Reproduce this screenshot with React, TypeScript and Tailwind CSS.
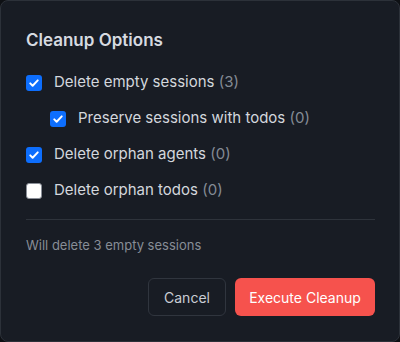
import React, { useState } from 'react';

interface Option {
  id: string;
  label: string;
  count: number;
  checked: boolean;
  nested?: boolean;
}

const Check: React.FC<{ checked: boolean; onClick: () => void }> = ({ checked, onClick }) => (
  <button
    type="button"
    onClick={onClick}
    className={
      checked
        ? 'w-4 h-4 rounded-[3px] bg-[#0d6efd] flex items-center justify-center shrink-0'
        : 'w-4 h-4 rounded-[3px] bg-white border border-[#8a8f98] shrink-0'
    }
  >
    {checked && (
      <svg viewBox="0 0 16 16" className="w-3 h-3" fill="none">
        <path d="M3 8.5l3.2 3.2L13 4.5" stroke="white" strokeWidth="2.6" strokeLinecap="round" strokeLinejoin="round" />
      </svg>
    )}
  </button>
);

export default function App() {
  const [options, setOptions] = useState<Option[]>([
    { id: 'empty', label: 'Delete empty sessions', count: 3, checked: true },
    { id: 'preserve', label: 'Preserve sessions with todos', count: 0, checked: true, nested: true },
    { id: 'agents', label: 'Delete orphan agents', count: 0, checked: true },
    { id: 'todos', label: 'Delete orphan todos', count: 0, checked: false },
  ]);

  const toggle = (id: string) =>
    setOptions((prev) => prev.map((o) => (o.id === id ? { ...o, checked: !o.checked } : o)));

  return (
    <div className="w-[400px] h-[342px] bg-[#0e1014]" style={{ fontFamily: 'Inter, "Liberation Sans", sans-serif' }}>
      <div className="w-full h-full rounded-lg border border-[#2c3139] bg-[#181c24] pl-[25px] pr-[24px] pt-[27px]">
        <h2 className="text-[17px] leading-6 font-semibold text-[#d6dae0]">Cleanup Options</h2>

        <div className="mt-[20px] flex flex-col gap-[15px]">
          {options.map((o) => (
            <label
              key={o.id}
              className={`flex items-center gap-3 h-[21px] cursor-pointer ${o.nested ? 'pl-6' : ''}`}
            >
              <Check checked={o.checked} onClick={() => toggle(o.id)} />
              <span className="text-[15px] text-[#d3d7dd]">
                {o.label} <span className="text-[#848b95]">({o.count})</span>
              </span>
            </label>
          ))}
        </div>

        <div className="mt-[18px] border-t border-[#2e333b]" />

        <p className="mt-[15px] text-[13px] leading-5 text-[#878d96]">Will delete 3 empty sessions</p>

        <div className="mt-[23px] flex justify-end gap-[9px]">
          <button className="h-[38px] w-[78px] rounded-md border border-[#30353e] text-[14px] text-[#c9cdd4]">
            Cancel
          </button>
          <button className="h-[38px] w-[140px] rounded-md bg-[#f6524d] text-[14px] text-white">
            Execute Cleanup
          </button>
        </div>
      </div>
    </div>
  );
}
